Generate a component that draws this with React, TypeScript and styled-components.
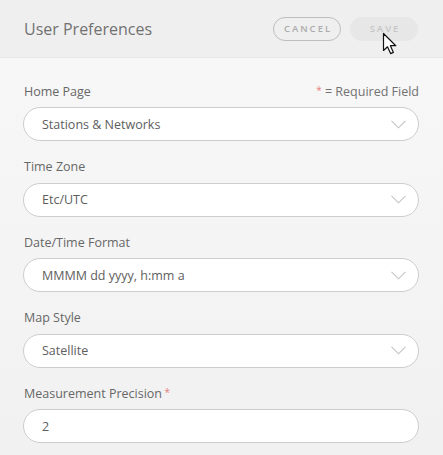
import styled, { createGlobalStyle } from "styled-components";

const FONT = `"Open Sans", "Noto Sans", sans-serif`;

const FIELDS = [
  { key: "home", label: "Home Page", value: "Stations & Networks", kind: "select" as const },
  { key: "tz", label: "Time Zone", value: "Etc/UTC", kind: "select" as const },
  { key: "fmt", label: "Date/Time Format", value: "MMMM dd yyyy, h:mm a", kind: "select" as const },
  { key: "map", label: "Map Style", value: "Satellite", kind: "select" as const },
  { key: "prec", label: "Measurement Precision", value: "2", kind: "input" as const, required: true },
];

const GlobalStyle = createGlobalStyle`
  html, body {
    margin: 0;
    padding: 0;
    background: #f2f2f2;
  }
  * {
    box-sizing: border-box;
  }
`;

const Page = styled.div`
  position: relative;
  width: 443px;
  height: 455px;
  overflow: hidden;
  font-family: ${FONT};
  background: linear-gradient(#f8f8f8, #f1f1f1);
`;

const Header = styled.header`
  height: 58px;
  padding: 0 25px 0 24px;
  display: flex;
  align-items: center;
  justify-content: space-between;
  background: #efefef;
  border-bottom: 1px solid #e6e6e6;
`;

const Title = styled.h1`
  margin: 0;
  font-size: 16px;
  font-weight: 400;
  color: #727272;
`;

const Actions = styled.div`
  display: flex;
  gap: 9px;
`;

const PillButton = styled.button<{ $filled?: boolean }>`
  width: 68px;
  height: 24px;
  border-radius: 12px;
  font-family: ${FONT};
  font-size: 9.5px;
  font-weight: 600;
  letter-spacing: 2px;
  padding: 0 0 0 2px;
  border: 1px solid ${({ $filled }) => ($filled ? "#e7e7e7" : "#bdbdbd")};
  background: ${({ $filled }) => ($filled ? "#e7e7e7" : "transparent")};
  color: ${({ $filled }) => ($filled ? "#c6c6c6" : "#acacac")};
`;

const Form = styled.div`
  padding: 24px 24px 0 23px;
  display: flex;
  flex-direction: column;
  gap: 16.5px;
`;

const Field = styled.div`
  display: flex;
  flex-direction: column;
  gap: 7px;
`;

const LabelRow = styled.div`
  display: flex;
  justify-content: space-between;
  align-items: center;
  height: 18px;
  padding-left: 1px;
`;

const Label = styled.span`
  font-size: 12.5px;
  color: #676767;
`;

const Note = styled.span`
  font-size: 12.5px;
  color: #727272;
`;

const Star = styled.span`
  font-size: 10px;
  vertical-align: 2px;
  color: #e58080;
`;

const Box = styled.div`
  height: 34px;
  border: 1px solid #cdcdcd;
  border-radius: 17px;
  background: #fff;
  display: flex;
  align-items: center;
  justify-content: space-between;
  padding: 0 12px 0 18px;
  font-size: 12.5px;
  color: #5e5e5e;
`;

const Chevron = () => (
  <svg width="15" height="9" viewBox="0 0 15 9" fill="none">
    <path d="M0.5 0.8 L7.5 7.8 L14.5 0.8" stroke="#c4c4c4" strokeWidth="1.1" />
  </svg>
);

const Cursor = styled.svg`
  position: absolute;
  left: 382px;
  top: 32px;
`;

export default function App() {
  return (
    <Page>
      <GlobalStyle />
      <Header>
        <Title>User Preferences</Title>
        <Actions>
          <PillButton>CANCEL</PillButton>
          <PillButton $filled>SAVE</PillButton>
        </Actions>
      </Header>
      <Form>
        {FIELDS.map((f, i) => (
          <Field key={f.key}>
            <LabelRow>
              <Label>
                {f.label}
                {f.required && <Star> *</Star>}
              </Label>
              {i === 0 && (
                <Note>
                  <Star>*</Star> = Required Field
                </Note>
              )}
            </LabelRow>
            <Box>
              <span>{f.value}</span>
              {f.kind === "select" && <Chevron />}
            </Box>
          </Field>
        ))}
      </Form>
      <Cursor width="18" height="24" viewBox="0 0 18 24">
        <path
          d="M1.5 1.5 L1.5 18.5 L5.5 14.8 L8.6 21.6 L11.4 20.4 L8.4 13.7 L13.8 13.7 Z"
          fill="#fff"
          stroke="#111"
          strokeWidth="1.2"
          strokeLinejoin="round"
        />
      </Cursor>
    </Page>
  );
}
